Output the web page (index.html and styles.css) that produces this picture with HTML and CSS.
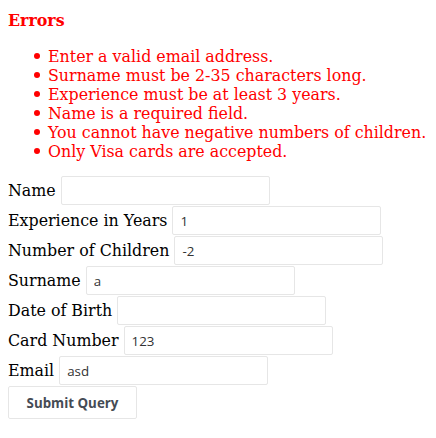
FILE: index.html
```html
<!DOCTYPE html>
<html lang="en-US">
<head>
	<title>Form errors</title>
	<meta charset="UTF-8">
	<link rel="stylesheet" href="styles.css">
</head>
<body>

<div class="errors">
	<h4 class="errors-title">Errors</h4>
	<ul class="errors-list">
		<li>Enter a valid email address.</li>
		<li>Surname must be 2-35 characters long.</li>
		<li>Experience must be at least 3 years.</li>
		<li>Name is a required field.</li>
		<li>You cannot have negative numbers of children.</li>
		<li>Only Visa cards are accepted.</li>
	</ul>
</div>

<form class="form">
	<div class="row">
		<label for="name">Name</label>
		<input class="field" type="text" id="name" value="">
	</div>
	<div class="row">
		<label for="experience">Experience in Years</label>
		<input class="field" type="text" id="experience" value="1">
	</div>
	<div class="row">
		<label for="children">Number of Children</label>
		<input class="field" type="text" id="children" value="-2">
	</div>
	<div class="row">
		<label for="surname">Surname</label>
		<input class="field" type="text" id="surname" value="a">
	</div>
	<div class="row">
		<label for="dob">Date of Birth</label>
		<input class="field" type="text" id="dob" value="">
	</div>
	<div class="row">
		<label for="card">Card Number</label>
		<input class="field" type="text" id="card" value="123">
	</div>
	<div class="row">
		<label for="email">Email</label>
		<input class="field" type="text" id="email" value="asd">
	</div>
	<div class="row">
		<button class="submit" type="submit">Submit Query</button>
	</div>
</form>

</body>
</html>
```

FILE: styles.css
```css
body {
	margin: 8px;
	font-family: "DejaVu Serif", serif;
	font-size: 15.85px;
	line-height: 19px;
	color: #000;
	background: #fff;
}

.errors { color: #f00; }

.errors-title {
	margin: 3px 0 17px;
	font-size: 15.85px;
	font-weight: bold;
}

.errors-list {
	margin: 0 0 15px;
	padding-left: 40px;
	list-style: none;
}

/* dot drawn by hand so it sits closer to the text than the default disc */
.errors-list li::before {
	content: "";
	display: inline-block;
	width: 6px;
	height: 6px;
	margin: 0 8px 0 -14px;
	border-radius: 50%;
	background: currentColor;
	vertical-align: 3px;
}

.row {
	display: flex;
	align-items: baseline;
	gap: 5px;
	margin-bottom: 1px;
}

.field {
	box-sizing: border-box;
	width: 209px;
	height: 29px;
	margin: 0;
	padding: 0 7px;
	border: 1px solid #e6e6e6;
	border-radius: 2px;
	font-family: "Open Sans", sans-serif;
	font-size: 13.333px;
	color: #333;
	background: #fff;
}

.submit {
	box-sizing: border-box;
	width: 129px;
	height: 33px;
	margin: 0;
	padding: 0;
	border: 1px solid #e6e6e6;
	border-radius: 2px;
	font-family: "Open Sans", sans-serif;
	font-size: 13.333px;
	font-weight: bold;
	color: #454b54;
	background: #fff;
}
```
